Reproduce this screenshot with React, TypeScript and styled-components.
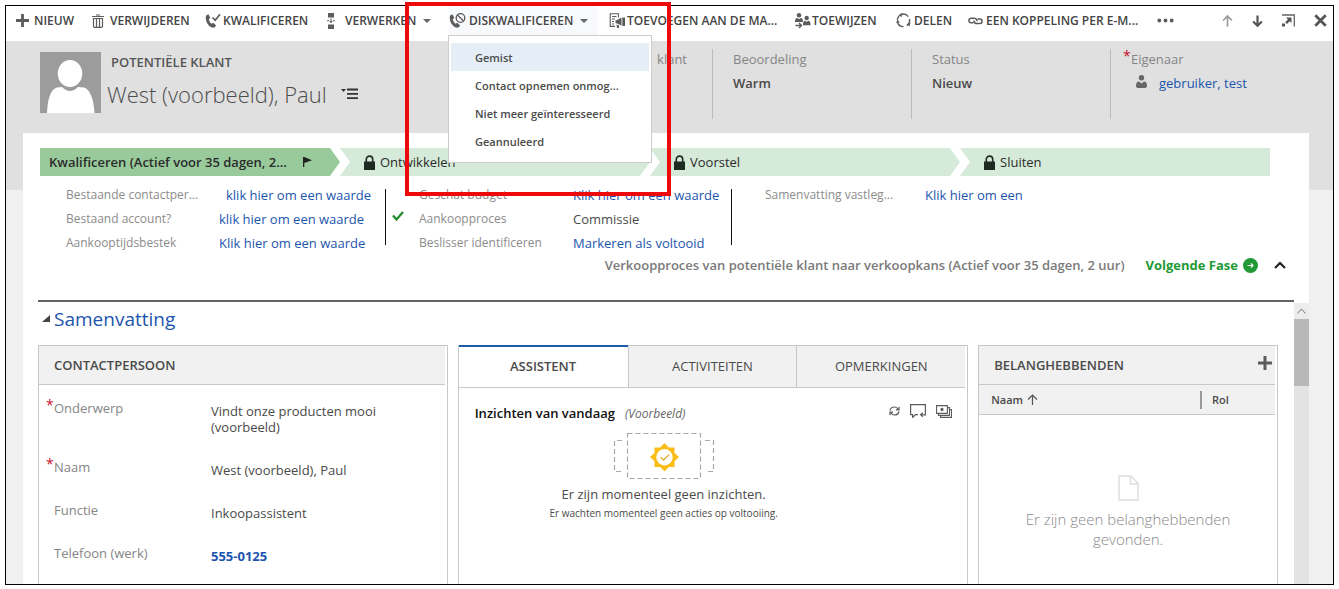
import React from "react";
import styled, { createGlobalStyle, css } from "styled-components";

const c = {
  ink: "#444444",
  text: "#4a4a4a",
  muted: "#858585",
  link: "#1c55ad",
  line: "#c6c9cb",
  head: "#f1f1f1",
  icon: "#5c5c5c",
  green: "#219a35",
};

const Global = createGlobalStyle`
  *, *::before, *::after { box-sizing: border-box; }
  body { margin: 0; background: #fff; }
  body, button { font-family: "Open Sans", "Noto Sans", sans-serif; font-size: 13px; color: ${c.text}; }
  button { border: 0; padding: 0; background: none; cursor: pointer; }
  a { color: ${c.link}; text-decoration: none; }
  h1, h2, h3, p, dl, dd, ul { margin: 0; padding: 0; }
  svg { display: block; flex: none; }
`;

const Page = styled.div`
  position: relative;
  display: flex;
  height: 100vh;
  padding: 5px 5px 4px;
`;

const Frame = styled.div`
  flex: 1;
  min-width: 0;
  display: flex;
  flex-direction: column;
  border: 1px solid #000;
  overflow: hidden;
`;

const Highlight = styled.div`
  position: absolute;
  left: 405px;
  top: 2px;
  width: 266px;
  height: 194px;
  border: 4px solid #ee0a0a;
  pointer-events: none;
  z-index: 5;
`;

const Toolbar = styled.nav`
  display: flex;
  flex: none;
  height: 35px;
  padding: 0 6px 0 10px;
  background: #fff;
`;

const Command = styled.div<{ $w: number }>`
  position: relative;
  flex: 0 0 ${(p) => p.$w}px;
  display: flex;
`;

const CommandButton = styled.button<{ $open?: boolean }>`
  display: flex;
  align-items: center;
  height: 29px;
  padding-right: 10px;
  font-size: 12px;
  font-weight: 600;
  color: ${c.ink};
  white-space: nowrap;
  ${(p) => p.$open && css`background: #f7f9fc;`}
`;

const IconSlot = styled.span<{ $wide?: boolean }>`
  flex: 0 0 ${(p) => (p.$wide ? 20 : 18)}px;
  display: flex;
`;

const Caret = styled.span`
  margin-left: 7px;
  border: 4px solid transparent;
  border-top-color: #666;
  border-bottom: 0;
`;

const WindowTools = styled.div`
  display: flex;
  align-items: center;
  gap: 19px;
  height: 29px;
  margin-left: auto;
`;

const Menu = styled.ul`
  position: absolute;
  left: -1px;
  top: 29px;
  z-index: 3;
  width: 204px;
  padding: 7px 2px;
  border: 1px solid #cdcdcd;
  background: #fff;
  list-style: none;
`;

const MenuItem = styled.button<{ $active?: boolean }>`
  display: block;
  width: 100%;
  height: 28px;
  padding-left: 24px;
  font-size: 11px;
  font-weight: 600;
  text-align: left;
  white-space: nowrap;
  background: ${(p) => (p.$active ? "#e5eef7" : "transparent")};
`;

const Record = styled.main`
  flex: 1;
  min-height: 0;
  display: flex;
  flex-direction: column;
  padding: 0 24px 0 17px;
  background: linear-gradient(#e0e0e0 149px, #f0f0f0 149px);
`;

const Header = styled.header`
  display: flex;
  flex: none;
  height: 92px;
  padding: 11px 0 0 17px;
`;

const Identity = styled.div`
  flex: 1;
  min-width: 0;
  padding-left: 6px;
`;

const EntityName = styled.p`
  padding-left: 4px;
  font-weight: 600;
  line-height: 20px;
  color: #555;
`;

const Title = styled.h1`
  display: flex;
  align-items: center;
  gap: 14px;
  font-size: 22px;
  font-weight: 300;
  line-height: 44px;
  white-space: nowrap;
  color: #4d4d4d;
`;

const HeaderField = styled.div`
  flex: 0 0 199px;
  height: 70px;
  margin-top: -3px;
  padding-left: 20px;
  border-left: 1px solid #bcbcbc;
`;

const HiddenField = styled(HeaderField)`
  flex-basis: 80px;
  border-left: 0;
  padding: 0 25px 0 0;
  text-align: right;
`;

const FieldLabel = styled.p`
  line-height: 20px;
  color: ${c.muted};
`;

const FieldValue = styled.p`
  display: flex;
  align-items: center;
  gap: 12px;
  padding-top: 4px;
  font-weight: 600;
  line-height: 20px;
  a { font-weight: 400; }
`;

const OwnerIcon = styled.span`
  padding: 0 0 4px 5px;
`;

const Star = styled.span`
  margin-left: -8px;
  display: inline-block;
  width: 8px;
  font-size: 14px;
  line-height: 14px;
  vertical-align: top;
  color: #c8102e;
`;

const Sheet = styled.section`
  flex: 1;
  min-height: 0;
  display: flex;
  flex-direction: column;
  background: #fff;
`;

const Stages = styled.div`
  display: grid;
  flex: none;
  grid-template-columns: 300fr 310fr 310fr 310fr;
  margin: 15px 39px 0 17px;
`;

const Stage = styled.button<{ $kind?: "first" | "last" }>`
  display: flex;
  align-items: center;
  gap: 5px;
  height: 28px;
  padding-left: 24px;
  white-space: nowrap;
  color: #2b2b2b;
  background: #d5ead8;
  clip-path: polygon(0 0, calc(100% - 10px) 0, 100% 50%, calc(100% - 10px) 100%, 0 100%, 10px 50%);
  ${(p) => p.$kind === "first" && css`
    gap: 16px;
    padding-left: 9px;
    font-weight: 600;
    background: #98ca9c;
    clip-path: polygon(0 0, calc(100% - 10px) 0, 100% 50%, calc(100% - 10px) 100%, 0 100%);
  `}
  ${(p) => p.$kind === "last" && css`
    clip-path: polygon(0 0, 100% 0, 100% 100%, 0 100%, 10px 50%);
  `}
`;

const Steps = styled.div`
  display: flex;
  flex: none;
  margin: 13px 39px 0 17px;
`;

const StepGroup = styled.dl<{ $label: number; $first?: boolean; $bar?: boolean }>`
  flex: 0 0 346px;
  display: grid;
  grid-template-columns: ${(p) => p.$label}px 1fr;
  grid-auto-rows: 24px;
  height: 56px;
  padding-left: ${(p) => (p.$first ? 26 : 33)}px;
  line-height: 12px;
  white-space: nowrap;
  ${(p) => p.$bar && css`border-right: 1px solid #111;`}
`;

const StepName = styled.dt`
  position: relative;
  font-size: 12px;
  color: #8c8c8c;
`;

const StepValue = styled.dd<{ $indent?: boolean }>`
  padding-left: ${(p) => (p.$indent ? 7 : 0)}px;
`;

const Done = styled.span`
  position: absolute;
  left: -27px;
  top: -2px;
`;

const ProcessBar = styled.div`
  display: flex;
  flex: none;
  align-items: center;
  justify-content: flex-end;
  height: 40px;
  margin: 0 23px 15px 15px;
  font-weight: 600;
  white-space: nowrap;
  color: #7a7a7a;
`;

const NextStage = styled.button`
  display: flex;
  align-items: center;
  gap: 5px;
  margin: 0 16px 0 21px;
  font-weight: 700;
  color: ${c.green};
`;

const FormArea = styled.div`
  flex: 1;
  min-height: 0;
  display: flex;
  overflow: hidden;
`;

const Form = styled.div`
  flex: 1;
  min-width: 0;
  display: flex;
  flex-direction: column;
  margin-left: 15px;
  padding-right: 16px;
  border-top: 2px solid #636363;
`;

const ScrollBar = styled.div`
  flex: 0 0 15px;
  margin-top: 3px;
  background: #e3e3e3;
`;

const ScrollUp = styled.button`
  display: flex;
  align-items: center;
  justify-content: center;
  width: 15px;
  height: 16px;
  background: #ececec;
`;

const ScrollThumb = styled.div`
  height: 67px;
  background: #b8b8b8;
`;

const SectionTitle = styled.h2`
  display: flex;
  align-items: center;
  gap: 4px;
  height: 43px;
  padding: 0 0 10px 4px;
  font-size: 19px;
  font-weight: 400;
  color: ${c.link};
`;

const Cards = styled.div`
  flex: 1;
  min-height: 0;
  display: grid;
  grid-template-columns: 410fr 511fr 300fr;
  gap: 10px;
`;

const Card = styled.section`
  min-width: 0;
  border: 1px solid ${c.line};
  border-bottom: 0;
`;

const CardHead = styled.div`
  display: flex;
  align-items: center;
  justify-content: space-between;
  height: 39px;
  margin-right: 2px;
  padding: 0 3px 0 15px;
  border-bottom: 1px solid ${c.line};
  background: ${c.head};
  h3 { font-size: 13px; font-weight: 600; color: ${c.text}; }
`;

const AddButton = styled.button`
  padding-bottom: 4px;
`;

const Fields = styled.dl`
  display: grid;
  grid-template-columns: 157px 190px;
  padding: 13px 0 0 15px;
  line-height: 16px;
`;

const Name = styled.dt<{ $h?: number }>`
  height: ${(p) => p.$h ?? 43}px;
  line-height: 20px;
  color: ${c.muted};
`;

const Value = styled.dd<{ $strong?: boolean }>`
  padding-top: 5px;
  font-weight: ${(p) => (p.$strong ? 700 : 400)};
`;

const Tabs = styled.div`
  display: grid;
  grid-template-columns: repeat(3, 1fr);
  margin-right: 2px;
`;

const Tab = styled.button<{ $on?: boolean }>`
  height: 42px;
  padding-bottom: 2px;
  border-bottom: 1px solid ${c.line};
  border-left: 1px solid ${c.line};
  background: ${c.head};
  ${(p) => p.$on && css`
    margin-top: -1px;
    height: 43px;
    border-top: 2px solid #1f5ca8;
    border-left: 0;
    background: #fff;
    font-weight: 600;
  `}
`;

const Insights = styled.div`
  display: flex;
  align-items: center;
  gap: 10px;
  height: 44px;
  padding: 6px 15px 0 16px;
  h3 { font-size: 13px; font-weight: 600; color: #111; }
  em { flex: 1; font-size: 12px; color: #666; }
`;

const IconRow = styled.div`
  display: flex;
  align-items: center;
  gap: 10px;
  padding-bottom: 4px;
`;

const Empty = styled.div`
  display: flex;
  flex-direction: column;
  align-items: center;
  width: 410px;
  line-height: 20px;
  p { padding-top: 4px; }
  small { font-size: 10px; line-height: 18px; }
`;

const Grid = styled.table`
  width: calc(100% - 2px);
  height: 30px;
  border-collapse: collapse;
  background: ${c.head};
  border-bottom: 1px solid ${c.line};
  th { padding: 0 0 0 12px; font-size: 11px; font-weight: 600; text-align: left; }
  th:last-child { width: 75px; padding: 0; }
`;

const Sort = styled.span`
  display: flex;
  align-items: center;
  gap: 4px;
`;

const Divided = styled.span`
  display: block;
  padding-left: 10px;
  border-left: 2px solid #999;
  line-height: 18px;
`;

const NoRecords = styled.div`
  display: flex;
  flex-direction: column;
  align-items: center;
  gap: 8px;
  padding: 60px 40px 0;
  font-size: 15px;
  font-weight: 300;
  line-height: 20px;
  text-align: center;
  color: #8a8a8a;
`;

const Plus = ({ size }: { size: number }) => (
  <svg width={size} height={size} viewBox="0 0 13 13"><path d="M6.5 0v13M0 6.5h13" stroke={c.icon} strokeWidth="2.8" /></svg>
);
const Trash = () => (
  <svg width="12" height="14" viewBox="0 0 12 14" fill="none" stroke={c.icon}>
    <path d="M0 2.500h12M4 1h4" strokeWidth="1" /><path d="M1.500 4v8.300q0 1 1 1h7q1 0 1-1V4M4.500 5v8M7.500 5v8" strokeWidth="1.200" />
    <path d="M1 4.500h10" />
  </svg>
);
const handset = "M3.4 1.2 1.2 2.6C-.2 6 2 11.8 6.2 14.2L9.3 14.8 11.1 12.6 8.2 9.8 6.4 10.8C4.8 9.5 4 7.8 3.8 6.1L5.4 5Z";
const PhoneCheck = () => (
  <svg width="16" height="15" viewBox="0 0 16 15"><path d={handset} fill={c.icon} /><path d="m7.500 4.500 2.700 2.700L15 1.200" fill="none" stroke={c.icon} strokeWidth="1.700" /></svg>
);
const PhoneBlock = () => (
  <svg width="17" height="16" viewBox="0 0 17 16">
    <path d={handset} fill={c.icon} />
    <g fill="none" stroke={c.icon} strokeWidth="1.300"><circle cx="11.500" cy="5" r="4.300" /><path d="m8.500 2 6 6" /></g>
  </svg>
);
const Process = () => (
  <svg width="8" height="16" viewBox="0 0 8 16" fill={c.icon}><path d="M1 0h6v4.500H1zM1 11.500h6V16H1zM0 7.300h2v1H0zM6 7.300h2v1H6zM3.500 5.500h1v2.500h1.300L4 10.300 2.200 8h1.300z" /></svg>
);
const Marketing = () => (
  <svg width="16" height="15" viewBox="0 0 16 15">
    <path d="M6 13.400H1.200V.8h8.300v3.700M3 3.500h4.500M3 6h3M3 8.500h2M3 11h2" fill="none" stroke={c.icon} strokeWidth="1.100" />
    <path d="m6.500 7.500 1.500-.5 4.500-2.500v8L8 10.500l-1.500-.5zM13.300 4.500H16v8.500h-2.700zM7.500 11.500l2.500 1V15H8z" fill={c.icon} />
  </svg>
);
const Assign = () => (
  <svg width="17" height="16" viewBox="0 0 17 16" fill={c.icon}>
    <circle cx="5" cy="2.300" r="2.200" /><path d="M1 8.500Q1 5.200 3.500 5L5 6.200 6.500 5Q9 5.200 9 8.500V9H1z" />
    <circle cx="12.700" cy="5" r="2.200" /><path d="M9 11.500q0-3.600 2.300-3.800l1.400 1.200 1.400-1.200q2.400.2 2.400 3.800v.8H9z" />
    <path d="M1.500 12.500h5.500M5 10l2.500 2.500L5 15" fill="none" stroke={c.icon} strokeWidth="1.400" />
  </svg>
);
const Share = () => (
  <svg width="15" height="15" viewBox="0 0 15 15" fill="none" stroke={c.icon} strokeWidth="1.400">
    <path d="M5 1.500A6.300 6.300 0 0 1 12.300 3.600M13.500 6A6.300 6.300 0 0 1 10.800 12.500M7.500 13.700A6.300 6.300 0 0 1 1.500 9" />
    <path d="M1.300 7A6.300 6.300 0 0 1 3.300 2.800" />
    <path d="M5.800 0v4L2.500 2.300zM14.500 9.500l-1 4-2.800-2.200zM0 9.800l1.700-3.300 2 3z" fill={c.icon} stroke="none" />
  </svg>
);
const LinkIcon = () => (
  <svg width="15" height="8" viewBox="0 0 15 8" fill="none" stroke={c.icon} strokeWidth="1.500">
    <path d="M5.500 5.800H3.200a2.300 2.300 0 0 1 0-4.600H6Q8.700 1.200 9.300 4.200" /><path d="M5.700 3.600Q6.300 6.600 9 6.600h2.800a2.300 2.300 0 0 0 0-4.600H9.500" />
  </svg>
);
const Dots = () => (
  <svg width="17" height="5" viewBox="0 0 17 5" fill={c.icon}><circle cx="2.300" cy="2.500" r="1.900" /><circle cx="8.500" cy="2.500" r="1.900" /><circle cx="14.700" cy="2.500" r="1.900" /></svg>
);
const Arrow = ({ up }: { up?: boolean }) => (
  <svg width="11" height="14" viewBox="0 0 12 14" fill="none" stroke={up ? "#999" : "#555"} strokeWidth={up ? 1.8 : 2.4}>
    {up ? <path d="M6 13V1.500M1.200 6.500 6 1.500l4.800 5" /> : <path d="M6 1v11M1.200 7.500l4.800 4.700 4.800-4.700" />}
  </svg>
);
const PopOut = () => (
  <svg width="13" height="13" viewBox="0 0 13 13"><path d="M0 1h12.300v11.500" fill="none" stroke="#666" strokeWidth="1.300" /><path d="M4 3.500h5.500V9L7.700 7.200 5 10 3.200 8.200 5.900 5.400zM0 9.500h3v3H0z" fill="#555" /></svg>
);
const Close = () => (
  <svg width="13" height="13" viewBox="0 0 13 13"><path d="m1.300 1.300 10.400 10.400m0-10.400L1.300 11.700" stroke="#555" strokeWidth="2.800" /></svg>
);
const Avatar = () => (
  <svg width="61" height="61" viewBox="0 0 61 61"><path fill="#9c9c9c" d="M0 0h61v61H0z" /><g fill="#fff"><ellipse cx="30" cy="21.500" rx="12.300" ry="13.500" /><path d="M7 61q1-23 10-25.500l5-.5q8 8 16 0l6 .5q9 3 10.500 25.500z" /></g></svg>
);
const TitleMenu = () => (
  <svg width="17" height="12" viewBox="0 0 17 12"><path d="M0 1h5L2.500 4z" fill="#333" /><path d="M6 1.500h11M6 5.800h11M6 10.200h11" stroke="#333" strokeWidth="1.800" /></svg>
);
const Person = () => (
  <svg width="11" height="13" viewBox="0 0 11 13" fill="#666"><circle cx="5.500" cy="2.700" r="2.700" /><path d="M0 11Q0 6.500 3 6.500l2.500 2 2.500-2q3 0 3 4.500 0 2-2 2H2q-2 0-2-2z" /></svg>
);
const Flag = () => (
  <svg width="9" height="10" viewBox="0 0 9 10"><path d="M0 0h1.300v10H0zM1.300 0 9 3.200 1.300 6z" fill="#222" /></svg>
);
const Lock = () => (
  <svg width="11" height="15" viewBox="0 0 11 15"><path d="M2.300 7V4.300a3.200 3.200 0 0 1 6.400 0V7" fill="none" stroke="#1e2b22" strokeWidth="1.600" /><path d="M0 6.500h11V15H0z" fill="#1e2b22" /></svg>
);
const Check = () => (
  <svg width="12" height="10" viewBox="0 0 12 10"><path d="m1 4.500 3.500 4L11 1" fill="none" stroke="#1c8c2a" strokeWidth="2.200" /></svg>
);
const NextIcon = () => (
  <svg width="15" height="15" viewBox="0 0 15 15"><circle cx="7.500" cy="7.500" r="7.500" fill={c.green} /><path d="M4.500 7.500h5.500M8 5.500l2 2-2 2" fill="none" stroke="#fff" strokeWidth="1.200" /></svg>
);
const Collapse = () => (
  <svg width="12" height="8" viewBox="0 0 12 8"><path d="m1 7 5-5 5 5" fill="none" stroke="#222" strokeWidth="2.200" /></svg>
);
const ThinUp = () => (
  <svg width="9" height="6" viewBox="0 0 9 6"><path d="M.5 5.500 4.500 1l4 4.500" fill="none" stroke="#777" /></svg>
);
const Triangle = () => (
  <svg width="8" height="7" viewBox="0 0 8 7"><path d="M8 0v7H0z" fill="#444" /></svg>
);
const Refresh = () => (
  <svg width="11" height="10" viewBox="0 0 11 10" fill="none" stroke={c.icon} strokeWidth="1.200"><path d="M1 4.500Q1.800 1 5.500 1q2.500 0 3.800 2.500M10 .8v3H7M10 5.500Q9.200 9 5.500 9 3 9 1.700 6.500M1 9.200v-3h3" /></svg>
);
const Comment = () => (
  <svg width="16" height="14" viewBox="0 0 16 14" fill="none" stroke={c.icon} strokeWidth="1.200"><path d="M15.400 7.500V.6H.6v10h2v2.800l2.900-2.800H8M15.400 7.500v3.300h-4.600M12.800 8.700l-2.200 2.100 2.200 2.100" /></svg>
);
const Stack = () => (
  <svg width="16" height="13" viewBox="0 0 16 13" fill="none" stroke={c.icon} strokeWidth="1.100"><path d="M.6.600h10.800v7.800H.6zM11.500 2.600h2v7.800h-11v-2M13.500 4.600h2v7.800h-11v-2" /><path d="M6 2.800v3.400M4.500 3.700 7.500 5.300M7.500 3.700 4.500 5.300" /></svg>
);
const InsightArt = () => (
  <svg width="102" height="48" viewBox="0 0 102 48" fill="none">
    <g stroke="#a8a8a8" strokeWidth="1.200" strokeDasharray="5 3"><path d="M14.500 1.500h73v45h-73zM9 8.500H1.500v31H9M92 8.500h8.500v31H92" /></g>
    <path fill="#fbbc14" d="m51.500 11 4.300 4.400h5.700v5.700L66 25l-4.500 4.300v5.700h-5.700L51.500 39.500 47.200 35h-5.700v-5.700L37 25l4.500-3.900v-5.700h5.700z" />
    <circle cx="51.500" cy="25.200" r="8.200" fill="#fff" /><path d="m47.500 25.200 3 3 5.500-5.500" stroke="#d9a520" strokeWidth="1.200" />
  </svg>
);
const ThinArrow = () => (
  <svg width="11" height="11" viewBox="0 0 11 11"><path d="M5.500 11V1M1 5.500l4.500-4.500L10 5.500" fill="none" stroke="#555" strokeWidth="1.200" /></svg>
);
const FileIcon = () => (
  <svg width="21" height="26" viewBox="0 0 21 26" fill="none" stroke="#dedede" strokeWidth="1.500"><path d="M1 1h12l7 7.500V25H1zM12.500 1v8H20" /></svg>
);

const commands = [
  { text: "NIEUW", w: 76, icon: <Plus size={13} /> },
  { text: "VERWIJDEREN", w: 113, icon: <Trash /> },
  { text: "KWALIFICEREN", w: 122, icon: <PhoneCheck /> },
  { text: "VERWERKEN", w: 122, icon: <Process />, caret: true },
  { text: "DISKWALIFICEREN", w: 160, icon: <PhoneBlock />, wide: true, caret: true, menu: ["Gemist", "Contact opnemen onmog...", "Niet meer geïnteresseerd", "Geannuleerd"] },
  { text: "TOEVOEGEN AAN DE MA...", w: 185, icon: <Marketing /> },
  { text: "TOEWIJZEN", w: 102, icon: <Assign /> },
  { text: "DELEN", w: 72, icon: <Share /> },
  { text: "EEN KOPPELING PER E-M...", w: 189, icon: <LinkIcon /> },
];

export default function App() {
  return (
    <Page>
      <Global />
      <Frame>
        <Toolbar>
          {commands.map((m) => (
            <Command key={m.text} $w={m.w}>
              <CommandButton $open={!!m.menu}>
                <IconSlot $wide={m.wide}>{m.icon}</IconSlot>
                {m.text}
                {m.caret && <Caret />}
              </CommandButton>
              {m.menu && (
                <Menu>
                  {m.menu.map((t, i) => (
                    <li key={t}><MenuItem $active={i === 0}>{t}</MenuItem></li>
                  ))}
                </Menu>
              )}
            </Command>
          ))}
          <CommandButton aria-label="Meer"><Dots /></CommandButton>
          <WindowTools>
            <button aria-label="Vorige"><Arrow up /></button>
            <button aria-label="Volgende"><Arrow /></button>
            <button aria-label="Nieuw venster"><PopOut /></button>
            <button aria-label="Sluiten"><Close /></button>
          </WindowTools>
        </Toolbar>
        <Record>
          <Header>
            <Avatar />
            <Identity>
              <EntityName>POTENTIËLE KLANT</EntityName>
              <Title>West (voorbeeld), Paul <TitleMenu /></Title>
            </Identity>
            <HiddenField><FieldLabel>klant</FieldLabel></HiddenField>
            <HeaderField>
              <FieldLabel>Beoordeling</FieldLabel>
              <FieldValue>Warm</FieldValue>
            </HeaderField>
            <HeaderField>
              <FieldLabel>Status</FieldLabel>
              <FieldValue>Nieuw</FieldValue>
            </HeaderField>
            <HeaderField>
              <FieldLabel><Star>*</Star>Eigenaar</FieldLabel>
              <FieldValue><OwnerIcon><Person /></OwnerIcon><a href="#eigenaar">gebruiker, test</a></FieldValue>
            </HeaderField>
          </Header>
          <Sheet>
            <Stages>
              <Stage $kind="first">Kwalificeren (Actief voor 35 dagen, 2... <Flag /></Stage>
              <Stage><Lock />Ontwikkelen</Stage>
              <Stage><Lock />Voorstel</Stage>
              <Stage $kind="last"><Lock />Sluiten</Stage>
            </Stages>
            <Steps>
              <StepGroup $label={153} $first $bar>
                <StepName>Bestaande contactper...</StepName>
                <StepValue $indent><a href="#contact">klik hier om een waarde</a></StepValue>
                <StepName>Bestaand account?</StepName>
                <StepValue><a href="#account">klik hier om een waarde</a></StepValue>
                <StepName>Aankooptijdsbestek</StepName>
                <StepValue><a href="#tijdsbestek">Klik hier om een waarde</a></StepValue>
              </StepGroup>
              <StepGroup $label={154} $bar>
                <StepName>Geschat budget</StepName>
                <StepValue><a href="#budget">Klik hier om een waarde</a></StepValue>
                <StepName><Done><Check /></Done>Aankoopproces</StepName>
                <StepValue>Commissie</StepValue>
                <StepName>Beslisser identificeren</StepName>
                <StepValue><a href="#beslisser">Markeren als voltooid</a></StepValue>
              </StepGroup>
              <StepGroup $label={160}>
                <StepName>Samenvatting vastleg...</StepName>
                <StepValue><a href="#samenvatting">Klik hier om een</a></StepValue>
              </StepGroup>
            </Steps>
            <ProcessBar>
              Verkoopproces van potentiële klant naar verkoopkans (Actief voor 35 dagen, 2 uur)
              <NextStage>Volgende Fase <NextIcon /></NextStage>
              <button aria-label="Samenvouwen"><Collapse /></button>
            </ProcessBar>
            <FormArea>
              <Form>
                <SectionTitle><Triangle />Samenvatting</SectionTitle>
                <Cards>
                  <Card>
                    <CardHead><h3>CONTACTPERSOON</h3></CardHead>
                    <Fields>
                      <Name $h={59}><Star>*</Star>Onderwerp</Name>
                      <Value>Vindt onze producten mooi (voorbeeld)</Value>
                      <Name><Star>*</Star>Naam</Name>
                      <Value>West (voorbeeld), Paul</Value>
                      <Name>Functie</Name>
                      <Value>Inkoopassistent</Value>
                      <Name>Telefoon (werk)</Name>
                      <Value $strong><a href="tel:5550125">555-0125</a></Value>
                    </Fields>
                  </Card>
                  <Card>
                    <Tabs role="tablist">
                      <Tab role="tab" aria-selected $on>ASSISTENT</Tab>
                      <Tab role="tab">ACTIVITEITEN</Tab>
                      <Tab role="tab">OPMERKINGEN</Tab>
                    </Tabs>
                    <Insights>
                      <h3>Inzichten van vandaag</h3>
                      <em>(Voorbeeld)</em>
                      <IconRow>
                        <button aria-label="Vernieuwen"><Refresh /></button>
                        <button aria-label="Feedback"><Comment /></button>
                        <button aria-label="Kaarten"><Stack /></button>
                      </IconRow>
                    </Insights>
                    <Empty>
                      <InsightArt />
                      <p>Er zijn momenteel geen inzichten.</p>
                      <small>Er wachten momenteel geen acties op voltooiing.</small>
                    </Empty>
                  </Card>
                  <Card>
                    <CardHead>
                      <h3>BELANGHEBBENDEN</h3>
                      <AddButton aria-label="Toevoegen"><Plus size={14} /></AddButton>
                    </CardHead>
                    <Grid>
                      <thead>
                        <tr>
                          <th><Sort>Naam <ThinArrow /></Sort></th>
                          <th><Divided>Rol</Divided></th>
                        </tr>
                      </thead>
                    </Grid>
                    <NoRecords>
                      <FileIcon />
                      <p>Er zijn geen belanghebbenden gevonden.</p>
                    </NoRecords>
                  </Card>
                </Cards>
              </Form>
              <ScrollBar>
                <ScrollUp aria-label="Omhoog"><ThinUp /></ScrollUp>
                <ScrollThumb />
              </ScrollBar>
            </FormArea>
          </Sheet>
        </Record>
      </Frame>
      <Highlight />
    </Page>
  );
}
